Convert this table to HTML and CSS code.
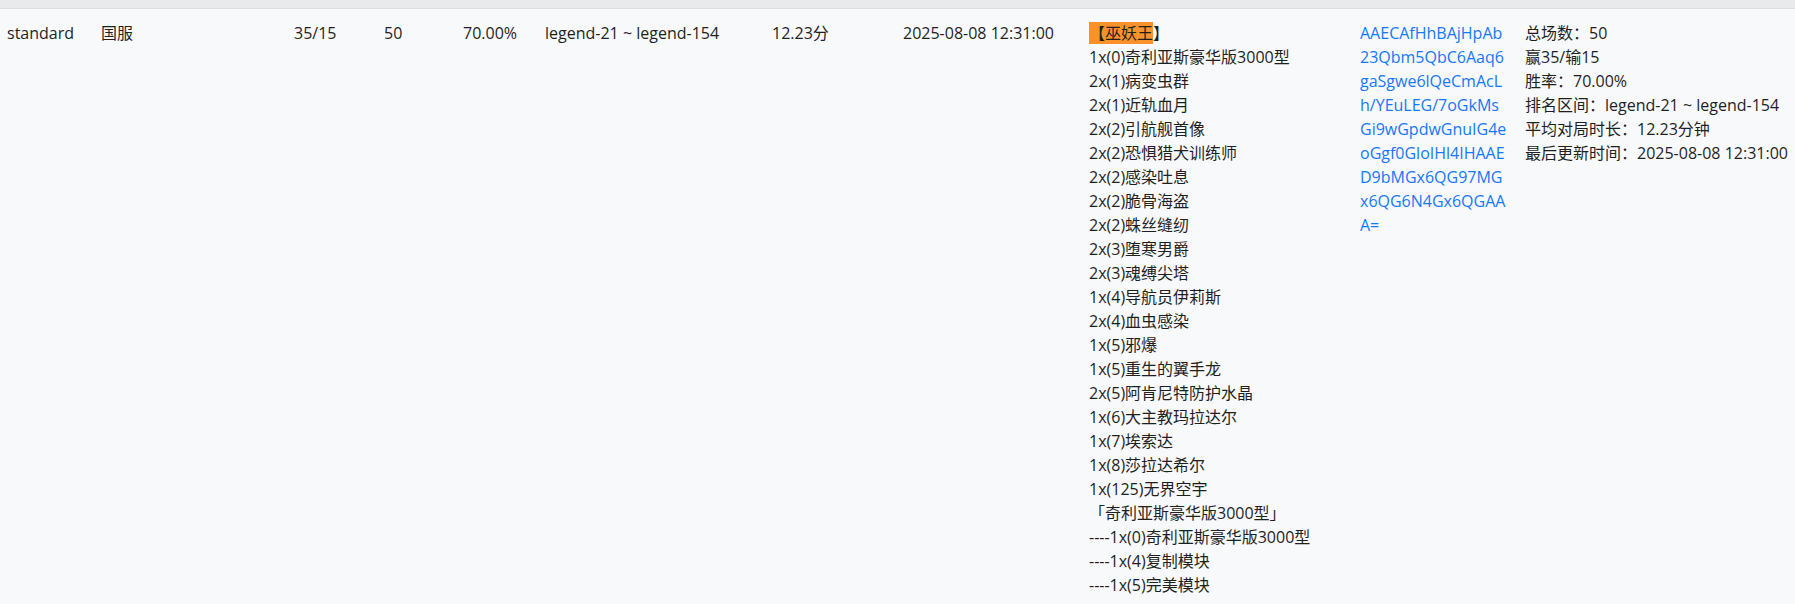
FILE: index.html
```html
<!DOCTYPE html>
<html lang="zh-CN">
<head>
  <meta charset="UTF-8">
  <title>卡组统计</title>
  <link rel="stylesheet" href="styles.css">
</head>
<body>

  <div class="table-head"></div>

  <div class="row">
    <div class="cell">standard</div>
    <div class="cell">国服</div>
    <div class="cell">35/15</div>
    <div class="cell">50</div>
    <div class="cell">70.00%</div>
    <div class="cell">legend-21 ~ legend-154</div>
    <div class="cell">12.23分</div>
    <div class="cell">2025-08-08 12:31:00</div>
    <div class="cell deck">
      <div><span class="tag">【巫妖王</span>】</div>
      <div>1x(0)奇利亚斯豪华版3000型</div>
      <div>2x(1)病变虫群</div>
      <div>2x(1)近轨血月</div>
      <div>2x(2)引航舰首像</div>
      <div>2x(2)恐惧猎犬训练师</div>
      <div>2x(2)感染吐息</div>
      <div>2x(2)脆骨海盗</div>
      <div>2x(2)蛛丝缝纫</div>
      <div>2x(3)堕寒男爵</div>
      <div>2x(3)魂缚尖塔</div>
      <div>1x(4)导航员伊莉斯</div>
      <div>2x(4)血虫感染</div>
      <div>1x(5)邪爆</div>
      <div>1x(5)重生的翼手龙</div>
      <div>2x(5)阿肯尼特防护水晶</div>
      <div>1x(6)大主教玛拉达尔</div>
      <div>1x(7)埃索达</div>
      <div>1x(8)莎拉达希尔</div>
      <div>1x(125)无界空宇</div>
      <div>「奇利亚斯豪华版3000型」</div>
      <div>----1x(0)奇利亚斯豪华版3000型</div>
      <div>----1x(4)复制模块</div>
      <div>----1x(5)完美模块</div>
    </div>
    <div class="cell code">
      <a href="#">AAECAfHhBAjHpAb<br>23Qbm5QbC6Aaq6<br>gaSgwe6lQeCmAcL<br>h/YEuLEG/7oGkMs<br>Gi9wGpdwGnuIG4e<br>oGgf0GloIHl4IHAAE<br>D9bMGx6QG97MG<br>x6QG6N4Gx6QGAA<br>A=</a>
    </div>
    <div class="cell stats">
      <div>总场数：50</div>
      <div>赢35/输15</div>
      <div>胜率：70.00%</div>
      <div>排名区间：legend-21 ~ legend-154</div>
      <div>平均对局时长：12.23分钟</div>
      <div>最后更新时间：2025-08-08 12:31:00</div>
    </div>
  </div>

</body>
</html>
```

FILE: styles.css
```css
body {
  margin: 0;
  font-family: "Open Sans", "Noto Sans CJK SC", sans-serif;
  font-size: 16px;
  line-height: 24px;
  color: #1f1f1f;
  background: #f8f9fb;
}

.table-head {
  height: 8px;
  background: #e9eaec;
  border-bottom: 1px solid #dcdddf;
}

.row {
  display: grid;
  grid-template-columns: 94px 193px 90px 79px 82px 227px 131px 186px 271px 165px 1fr;
  padding-top: 12px;
}
.cell { padding: 0 7px; white-space: nowrap; }

.tag { background: #fa922b; }

.code a {
  color: #1677ff;
  text-decoration: none;
}
```
